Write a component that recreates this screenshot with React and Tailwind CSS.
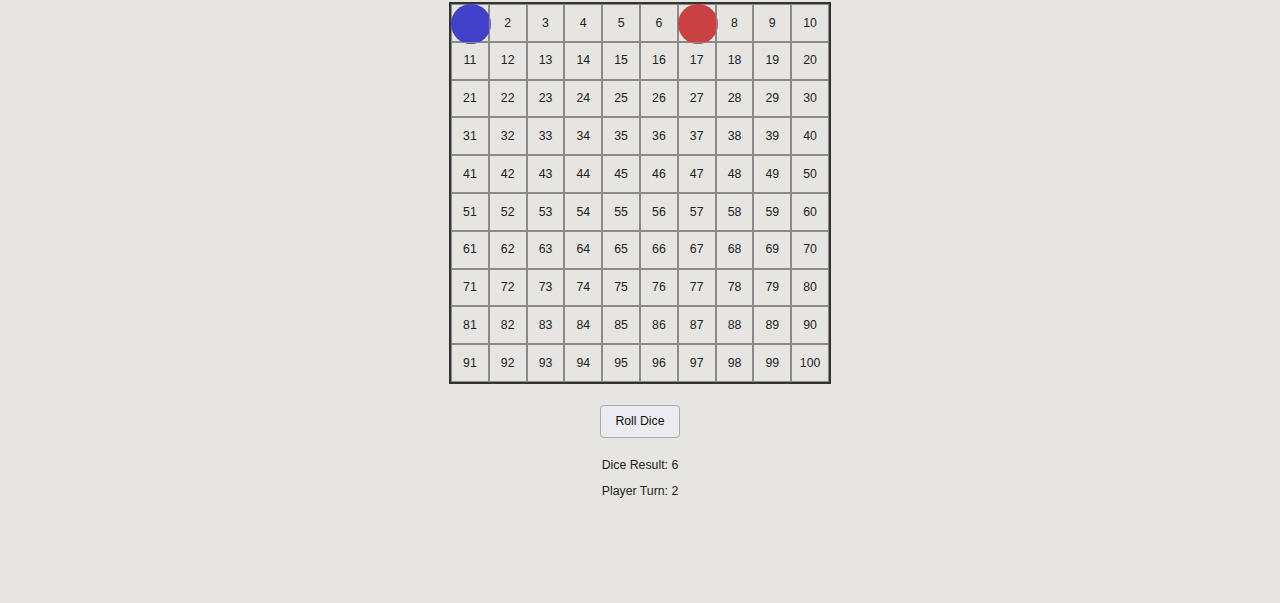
import React from 'react';

const Board = ({ positions }) => {
    const cells = Array.from({ length: 100 }, (_, i) => i + 1);

    return (
        <div className="mx-auto mt-[2px] w-[382px] border-2 border-[#333] grid grid-cols-10">
            {cells.map((n) => (
                <div
                    key={n}
                    className="relative h-[37.8px] border border-[#8a8a8a] flex items-center justify-center text-[12.3px] text-[#222]"
                >
                    {n}
                    {positions[0] === n && (
                        <div className="absolute -left-px -top-px w-[40px] h-[40px] rounded-full bg-[#4141c9]"></div>
                    )}
                    {positions[1] === n && (
                        <div className="absolute -left-px -top-px w-[40px] h-[40px] rounded-full bg-[#c94141]"></div>
                    )}
                </div>
            ))}
        </div>
    );
};

export default function App() {
    const positions = [1, 7];

    return (
        <div
            className="min-h-[603px] bg-[#e6e5e1] flex flex-col items-center"
            style={{ fontFamily: '"Liberation Sans", Arial, sans-serif' }}
        >
            <Board positions={positions} />

            <button className="mt-[21px] h-[33px] px-[14px] rounded-[4px] border border-[#a9a9ad] bg-[#ecebef] text-[12.3px] text-[#111]">
                Roll Dice
            </button>

            <p className="mt-[19px] text-[12.3px] leading-4 text-[#222]">Dice Result: 6</p>
            <p className="mt-[10px] text-[12.3px] leading-4 text-[#222]">Player Turn: 2</p>
        </div>
    );
}
